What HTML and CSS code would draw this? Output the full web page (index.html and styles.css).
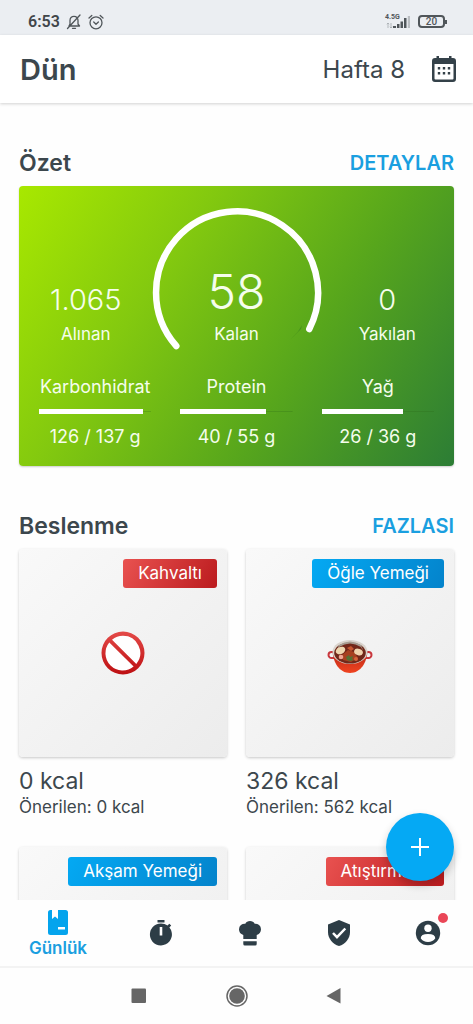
FILE: index.html
```html
<!DOCTYPE html>
<html lang="tr">
<head>
<meta charset="utf-8">
<meta name="viewport" content="width=device-width, initial-scale=1">
<title>Günlük</title>
<link rel="stylesheet" href="styles.css">
</head>
<body>
<div class="app">
  <div class="status">
    <span class="clock">6:53</span>
    <svg class="status-icon" width="16" height="16" viewBox="0 0 16 16" fill="none" stroke="#50565a" stroke-width="1.3" stroke-linecap="round" stroke-linejoin="round" aria-hidden="true"><path d="M3 12h10.500l-1.500-2V6.500C12 4 10.500 2.300 8 2.300S4 4 4 6.500V10zM6.500 14.300h3M14 1 1.500 14.500"/></svg>
    <svg class="status-icon" width="16" height="16" viewBox="0 0 16 16" fill="none" stroke="#50565a" stroke-width="1.300" stroke-linecap="round" stroke-linejoin="round" aria-hidden="true"><circle cx="8" cy="8.800" r="6"/><path d="M5.700 8 8 10.200 10.400 8M1 4l2.800-2.500M15 4l-2.800-2.500"/></svg>
    <span class="signal">
      <span class="network">4.5G</span>
      <svg width="26" height="14" viewBox="0 0 26 14" aria-hidden="true"><path d="M3 8v5M1.800 9.200 3 8l1.200 1.200M6 8v5M4.800 11.800 6 13l1.200-1.200" fill="none" stroke="#a5aaae" stroke-width=".8"/><path d="M8 11h3v2H8zM12 9h2.500v4H12zM15.500 6.500H18V13h-2.500zM19 3h2.500v10H19z" fill="#50565a"/><path d="M22.800 1H25v12h-2.200z" fill="#b9bdc1"/></svg>
    </span>
    <span class="battery">20</span>
  </div>

  <header class="topbar">
    <h1 class="day">Dün</h1>
    <span class="week">Hafta 8</span>
    <button class="icon-button" type="button" aria-label="Takvim">
      <svg width="26" height="28" viewBox="0 0 26 28" aria-hidden="true"><path fill="#344149" fill-rule="evenodd" d="M5.500 1h2.500v2h10V1h2.500v2H22a3 3 0 0 1 3 3v18a3 3 0 0 1-3 3H4a3 3 0 0 1-3-3V6a3 3 0 0 1 3-3h1.500zM3.500 9v14.500a1 1 0 0 0 1 1h17a1 1 0 0 0 1-1V9z"/><path fill="#344149" d="M6.800 12h2.400v2.400H6.800zM11.800 12h2.400v2.400h-2.400zM16.800 12h2.400v2.400h-2.400zM6.800 17h2.400v2.400H6.800zM11.800 17h2.400v2.400h-2.400zM16.800 17h2.400v2.400h-2.400z"/></svg>
    </button>
  </header>

  <main class="content">
    <section>
      <div class="section-head"><h2>Özet</h2><a href="#detaylar">DETAYLAR</a></div>
      <div class="summary">
        <div class="totals">
          <div class="total"><span class="total-value">1.065</span><span>Alınan</span></div>
          <div class="gauge">
            <svg class="ring" viewBox="0 0 168 140" aria-hidden="true" fill="none" stroke-linecap="round"><path d="M149 117 145 123.500 138 131 148 121z" fill="#397f1d" opacity=".55"/><path d="M23.300 138A81 81 0 1 1 156.300 121" stroke="#fff" stroke-width="6.500"/></svg>
            <div class="remaining"><span class="remaining-value">58</span><span>Kalan</span></div>
          </div>
          <div class="total"><span class="total-value">0</span><span>Yakılan</span></div>
        </div>
        <div class="macros">
          <div class="macro"><span>Karbonhidrat</span><div class="track"><div class="fill" style="width:93%"></div></div><span>126 / 137 g</span></div>
          <div class="macro"><span>Protein</span><div class="track"><div class="fill" style="width:76%"></div></div><span>40 / 55 g</span></div>
          <div class="macro"><span>Yağ</span><div class="track"><div class="fill" style="width:72%"></div></div><span>26 / 36 g</span></div>
        </div>
      </div>
    </section>

    <section>
      <div class="section-head"><h2>Beslenme</h2><a href="#fazlasi">FAZLASI</a></div>
      <div class="meals">
        <article class="meal">
          <div class="tile">
            <span class="tag tag-red">Kahvaltı</span>
            <svg class="food" width="46" height="46" viewBox="0 0 46 46" aria-hidden="true"><defs><linearGradient id="ban" x2="0" y2="1"><stop stop-color="#e44a48"/><stop offset="1" stop-color="#bd0f12"/></linearGradient></defs><circle cx="23" cy="23" r="19" fill="#fff"/><path fill="url(#ban)" fill-rule="evenodd" d="M23 1.500a21.500 21.500 0 1 0 0 43 21.500 21.500 0 0 0 0-43zM23 5.800a17.200 17.200 0 0 1 13.300 28.100L12 9.700A17.200 17.200 0 0 1 23 5.800zM9.300 12.500 33.600 36.600A17.200 17.200 0 0 1 9.300 12.500z"/></svg>
          </div>
          <div class="kcal">0 kcal</div>
          <div class="advice">Önerilen: 0 kcal</div>
        </article>
        <article class="meal">
          <div class="tile">
            <span class="tag tag-blue">Öğle Yemeği</span>
            <svg class="food" width="46" height="46" viewBox="0 0 46 46" aria-hidden="true"><defs><linearGradient id="pot" x2="0" y2="1"><stop stop-color="#b92718"/><stop offset="1" stop-color="#f04420"/></linearGradient></defs><path d="M7 22H4.500a2.500 2.500 0 0 0 0 6H8M39 22h2.500a2.500 2.500 0 0 1 0 6H38" fill="none" stroke="#c9383e" stroke-width="2"/><path d="M5.500 21C6 32 12 43 23 43s17-11 17.500-22z" fill="url(#pot)"/><ellipse cx="23" cy="22" rx="17.500" ry="12" fill="#d9d3cc"/><ellipse cx="23" cy="23" rx="15.800" ry="10.500" fill="#70291b"/><path d="M10 20q13-11 26 0l-2-5q-11-7-22 0z" fill="#a69c91"/><path d="M12 17q11-7 22 0l3 6q-5 9-14 9T9 24z" fill="#722719"/><path d="m15 25 6-5 6 2 4 6-7 4-8-2z" fill="#a64020"/><ellipse cx="13.500" cy="20.500" rx="5" ry="3.500" fill="#eed6af" transform="rotate(-25 13.500 20.500)"/><ellipse cx="31.500" cy="22" rx="4.500" ry="3.200" fill="#efd3ae" transform="rotate(20 31.500 22)"/><circle cx="14" cy="27" r="2.300" fill="#efa591"/><circle cx="29" cy="29" r="2" fill="#d5633b"/><path d="m20 18 4-2 3 3-3 2z" fill="#c65631"/><path d="m19 27 3-2 1 2 3-1-1 3 2 1-4 1-3-1z" fill="#547033"/></svg>
          </div>
          <div class="kcal">326 kcal</div>
          <div class="advice">Önerilen: 562 kcal</div>
        </article>
        <article class="meal"><div class="tile"><span class="tag tag-blue">Akşam Yemeği</span></div></article>
        <article class="meal"><div class="tile"><span class="tag tag-red">Atıştırmalık</span></div></article>
      </div>
    </section>
  </main>

  <footer class="footer">
    <button class="fab" type="button" aria-label="Ekle"><svg width="18" height="18" viewBox="0 0 18 18" aria-hidden="true"><path d="M9 0v18M0 9h18" stroke="#fff" stroke-width="2"/></svg></button>
    <nav class="tabs">
      <a class="tab tab-active" href="#gunluk"><svg width="20" height="25" viewBox="0 0 20 25" aria-hidden="true"><path fill="#04a4ed" fill-rule="evenodd" d="M2.500 0H4v9l3-2.500L10 9V0h7.500A2.500 2.500 0 0 1 20 2.500v20a2.500 2.500 0 0 1-2.500 2.500h-15A2.500 2.500 0 0 1 0 22.500v-20A2.500 2.500 0 0 1 2.500 0zM10 17v2.500h7V17z"/></svg><span>Günlük</span></a>
      <a class="tab" href="#oruc" aria-label="Zamanlayıcı"><svg width="24" height="28" viewBox="0 0 24 28" aria-hidden="true"><path fill="#2d3d46" fill-rule="evenodd" d="M8.500 1h7v2.500h-7zM12 4.500c2.500 0 4.700.8 6.500 2.100l1.800-1.800 1.900 1.800-1.800 1.900A11 11 0 1 1 12 4.500zM10.700 8v8.500h2.600V8z"/></svg></a>
      <a class="tab" href="#tarifler" aria-label="Tarifler"><svg width="24" height="28" viewBox="0 0 24 28" aria-hidden="true"><path fill="#2d3d46" d="M12 2c2.100 0 3.900 1 4.700 2.700a5.700 5.700 0 0 1 6.300 5.500c0 2.800-1.800 5-4.300 5.700V20H5.300v-4.100A5.900 5.900 0 0 1 1 10.200a5.700 5.700 0 0 1 6.300-5.500C8.100 3 9.900 2 12 2zM5.300 22.300h13.400V25q0 1.500-1.500 1.500H6.800q-1.500 0-1.500-1.500z"/></svg></a>
      <a class="tab" href="#pro" aria-label="Pro"><svg width="24" height="28" viewBox="0 0 24 28" aria-hidden="true"><path fill="#2d3d46" d="M12 1 23 5.500V13c0 6.500-4.600 12.300-11 14C5.600 25.300 1 19.500 1 13V5.500z"/><path d="m6 14 4 4.200 8.300-8.700" fill="none" stroke="#fff" stroke-width="2.500"/></svg></a>
      <a class="tab" href="#profil" aria-label="Profil"><span class="avatar"><svg width="26" height="26" viewBox="0 0 26 26" aria-hidden="true"><circle cx="13" cy="13" r="12.200" fill="#2d3d46"/><circle cx="13" cy="8.300" r="3.700" fill="#fff"/><path fill="#fff" d="M5.700 18.300q0-4.300 7.300-4.300t7.300 4.300q-2.500 3.800-7.300 3.800t-7.300-3.800z"/></svg><span class="dot"></span></span></a>
    </nav>
    <div class="system">
      <button class="icon-button" type="button" aria-label="Son uygulamalar"><svg width="22" height="22" viewBox="0 0 22 22" aria-hidden="true"><rect x="3.500" y="3.500" width="14.500" height="14.500" rx="1" fill="#666"/></svg></button>
      <button class="icon-button" type="button" aria-label="Ana ekran"><svg width="22" height="22" viewBox="0 0 22 22" aria-hidden="true"><circle cx="11" cy="11" r="10" fill="none" stroke="#666" stroke-width="1.500"/><circle cx="11" cy="11" r="7.800" fill="#666"/></svg></button>
      <button class="icon-button" type="button" aria-label="Geri"><svg width="22" height="22" viewBox="0 0 22 22" aria-hidden="true"><path d="M16.500 3v15.500L2.500 11z" fill="#666"/></svg></button>
    </div>
  </footer>
</div>
</body>
</html>
```

FILE: styles.css
```css
* { box-sizing: border-box; }

body {
  margin: 0;
  background: #fefefe;
  color: #3c474d;
  font-family: Inter, Roboto, "Liberation Sans", sans-serif;
}

h1, h2 { margin: 0; font-weight: 600; }
a { color: #1a9fe0; text-decoration: none; }
svg { display: block; }
button { border: 0; padding: 0; background: none; cursor: pointer; }

.app { display: flex; flex-direction: column; height: 100vh; }

.status {
  display: flex;
  align-items: center;
  height: 35px;
  padding: 8px 28px 0;
  background: #ebeef2;
  font-family: Roboto, sans-serif;
}
.clock { color: #41464a; font-size: 16px; font-weight: 600; }
.status-icon { margin-left: 6px; }
.signal { display: grid; margin-left: auto; }
.signal > * { grid-area: 1 / 1; }
.network { color: #50565a; font-size: 7px; line-height: 4px; font-weight: 700; }
.battery {
  position: relative;
  width: 27px;
  margin-left: 7px;
  border: 2px solid #50565a;
  border-radius: 4px;
  color: #50565a;
  font-size: 10px;
  line-height: 9px;
  font-weight: 500;
  text-align: center;
}
.battery::after {
  content: "";
  position: absolute;
  top: 3px;
  right: -4px;
  width: 2px;
  height: 4px;
  background: #50565a;
}

.topbar {
  display: flex;
  align-items: center;
  height: 68px;
  padding: 0 16px 0 20px;
  background: #fff;
  box-shadow: 0 1px 3px rgba(0, 0, 0, .18);
  z-index: 1;
}
.day { font-size: 29px; }
.week { margin-left: auto; font-size: 24px; }
.topbar .icon-button { margin-left: 26px; }

.content { flex: 1; overflow-y: auto; padding: 45px 19px 0; scrollbar-width: none; }

.section-head {
  display: flex;
  justify-content: space-between;
  align-items: center;
  height: 30px;
  margin-bottom: 8px;
}
h2 { font-size: 23px; }
.section-head a { font-size: 20px; font-weight: 600; }

.summary {
  margin-bottom: 45px;
  padding: 22px 0 18px;
  border-radius: 4px;
  background: linear-gradient(123deg, #a8e800 0%, #83c90f 32%, #57a61c 64%, #2c7d35 100%);
  box-shadow: 0 1px 2px rgba(0, 0, 0, .2);
  color: #f5fdec;
  font-size: 18px;
  line-height: 22px;
}
.totals {
  display: grid;
  grid-template-columns: 1fr 168px 1fr;
  align-items: end;
  font-size: 17px;
}
.total, .remaining, .macro { display: flex; flex-direction: column; align-items: center; }
.total, .remaining { padding-bottom: 3px; }
.total-value { margin-bottom: 6px; font-size: 29px; line-height: 34px; font-weight: 300; }
.gauge { display: grid; align-items: end; }
.gauge > * { grid-area: 1 / 1; }
.ring { overflow: visible; }
.remaining-value { margin-bottom: 3px; font-size: 48px; line-height: 56px; font-weight: 300; }
.macros {
  display: grid;
  grid-template-columns: repeat(3, 1fr);
  gap: 29px;
  margin-top: 28px;
  padding: 0 20px;
}
.track {
  width: 100%;
  height: 5px;
  margin: 11px 0 12px;
  background: linear-gradient(rgba(40, 100, 20, .25), rgba(40, 100, 20, .25)) center / 100% 1px no-repeat;
}
.fill { height: 5px; background: #fff; }

.meals { display: grid; grid-template-columns: 1fr 1fr; gap: 29px 19px; }
.tile {
  display: grid;
  grid-template-rows: 29px 1fr 29px;
  height: 208px;
  padding: 10px;
  border-radius: 4px;
  background: linear-gradient(135deg, #f9f9f9, #ececec);
  box-shadow: 0 1px 3px rgba(0, 0, 0, .22);
}
.tag {
  justify-self: end;
  padding: 0 15px;
  border-radius: 3px;
  color: #fff;
  font-size: 17px;
  line-height: 29px;
}
.tag-red { background: linear-gradient(120deg, #e95250, #bb1b1e); }
.tag-blue { background: linear-gradient(120deg, #04a9f3, #0483cb); }
.food { place-self: center; }
.kcal { margin-top: 9px; font-size: 23px; line-height: 30px; }
.advice { font-size: 17px; line-height: 22px; }

.footer { position: relative; background: #fefefe; z-index: 1; }
.fab {
  position: absolute;
  top: -87px;
  right: 19px;
  display: grid;
  place-items: center;
  width: 68px;
  height: 68px;
  border-radius: 50%;
  background: #05a9f4;
  box-shadow: 0 4px 8px rgba(0, 0, 0, .2);
}
.tabs { display: flex; height: 68px; border-bottom: 2px solid #f3f3f3; }
.tab {
  flex: 1;
  display: flex;
  flex-direction: column;
  align-items: center;
  justify-content: center;
  gap: 2px;
}
.tab-active { flex: 1.3; padding-top: 3px; font-size: 17px; line-height: 22px; font-weight: 600; }
.avatar { position: relative; }
.dot {
  position: absolute;
  top: -7px;
  right: -7px;
  width: 10px;
  height: 10px;
  border-radius: 50%;
  background: #ea4657;
}
.system { display: flex; justify-content: center; align-items: center; gap: 76px; height: 56px; }
```
